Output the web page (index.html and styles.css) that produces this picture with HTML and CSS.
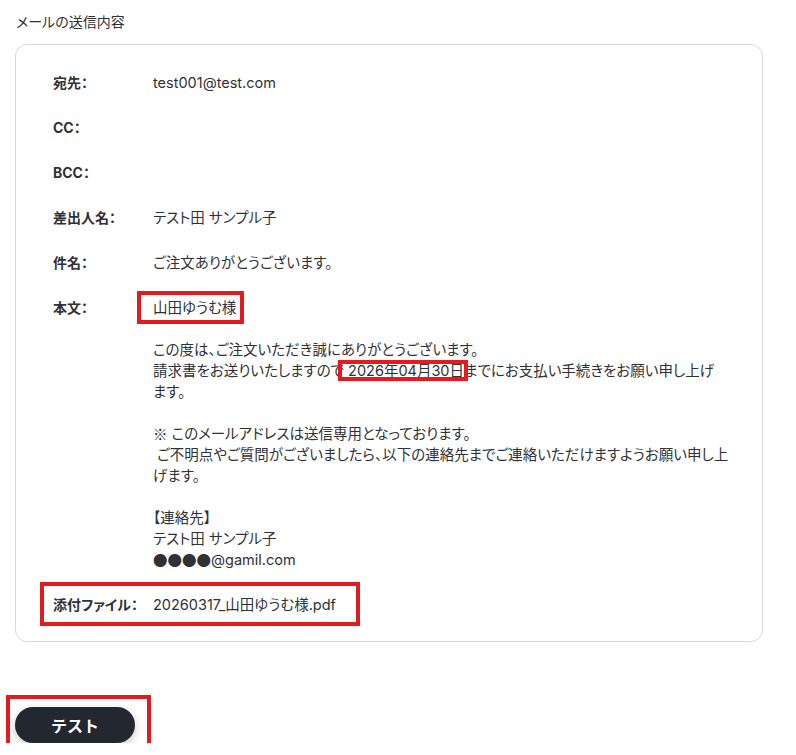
FILE: index.html
```html
<!DOCTYPE html>
<html lang="ja">
<head>
<meta charset="utf-8">
<title>メールの送信内容</title>
<link rel="stylesheet" href="styles.css">
</head>
<body>
<div class="page">
  <h2 class="title">メールの送信内容</h2>
  <div class="card">
    <div class="row"><div class="label">宛先：</div><div class="value">test001@test.com</div></div>
    <div class="row"><div class="label">CC：</div><div class="value"></div></div>
    <div class="row"><div class="label">BCC：</div><div class="value"></div></div>
    <div class="row"><div class="label">差出人名：</div><div class="value">テスト田 サンプル子</div></div>
    <div class="row"><div class="label">件名：</div><div class="value">ご注文ありがとうございます。</div></div>
    <div class="row">
      <div class="label">本文：</div>
      <div class="value body"><span class="mark mark-name">山田ゆうむ様</span><br><br>この度は、ご注文いただき誠にありがとうございます。<br>請求書をお送りいたしますので<span class="mark mark-date"> 2026年04月30日</span>までにお支払い手続きをお願い申し上げ<br>ます。<br><br><span class="jp">※</span> このメールアドレスは送信専用となっております。<br>&nbsp;ご不明点やご質問がございましたら、以下の連絡先までご連絡いただけますようお願い申し上<br>げます。<br><br>【連絡先】<br>テスト田 サンプル子<br><span class="jp">●●●●</span>@gamil.com</div>
    </div>
    <div class="row mark mark-attach"><div class="label">添付ファイル：</div><div class="value">20260317_山田ゆうむ様.pdf</div></div>
  </div>
  <div class="actions">
    <button class="btn mark mark-btn" type="button">テスト</button>
  </div>
</div>
</body>
</html>
```
FILE: styles.css
```css
html, body {
  margin: 0;
  padding: 0;
  background: #ffffff;
}
body {
  font-family: Inter, "Noto Sans CJK JP", sans-serif;
  font-size: 14.5px;
  line-height: 21px;
  color: #2f3136;
  font-feature-settings: "palt";
}
.page {
  padding: 11px 15px 0 15px;
  width: 748px;
}
.title {
  margin: 0;
  font-size: 14px;
  font-weight: 400;
  line-height: 21px;
  color: #2f3136;
  padding-left: 1px;
}
.card {
  margin-top: 12px;
  border: 1px solid #d3d8e0;
  border-radius: 12px;
  padding: 27px 20px 26px 37px;
  display: flex;
  flex-direction: column;
  gap: 24px;
}
.row {
  display: flex;
  align-items: flex-start;
}
.label {
  width: 100px;
  flex: none;
  font-weight: 700;
  font-size: 14px;
  color: #2f3136;
}
.value {
  flex: 1;
  white-space: nowrap;
  min-height: 21px;
}
.body {
  line-height: 21px;
}
.jp {
  font-family: "Noto Sans CJK JP", sans-serif;
  font-feature-settings: normal;
  display: inline-block;
  height: 21px;
  line-height: 21px;
  vertical-align: top;
}
.mark {
  position: relative;
}
.mark::after {
  content: "";
  position: absolute;
  border: 4px solid #e31b1f;
  pointer-events: none;
}
.mark-name::after {
  left: -16px;
  right: -8px;
  top: -8px;
  bottom: -8px;
}
.mark-date::after {
  left: -6px;
  right: -4px;
  top: -2px;
  bottom: -2px;
}
.mark-attach {
  align-self: flex-start;
  padding-right: 24px;
}
.mark-attach::after {
  left: -13px;
  right: 0;
  top: -12px;
  bottom: -11px;
}
.actions {
  margin-top: 65px;
  display: flex;
}
.btn {
  width: 120px;
  height: 36px;
  border: none;
  border-radius: 18px;
  background: #23272f;
  color: #ffffff;
  font-family: Inter, "Noto Sans CJK JP", sans-serif;
  font-size: 16px;
  font-weight: 700;
  box-shadow: 0 3px 10px rgba(0, 0, 0, 0.22);
  padding: 0;
}
.mark-btn::after {
  left: -9px;
  right: -16px;
  top: -12px;
  bottom: -10px;
}
```
